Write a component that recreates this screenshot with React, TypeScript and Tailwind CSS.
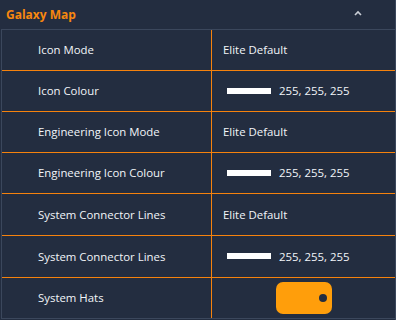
import React from "react";

type Row = { label: string; kind: "text" | "colour" | "toggle"; value?: string; h: string };

const rows: Row[] = [
  { label: "Icon Mode", kind: "text", value: "Elite Default", h: "h-[41px]" },
  { label: "Icon Colour", kind: "colour", value: "255, 255, 255", h: "h-[41px]" },
  { label: "Engineering Icon Mode", kind: "text", value: "Elite Default", h: "h-[41px]" },
  { label: "Engineering Icon Colour", kind: "colour", value: "255, 255, 255", h: "h-[41px]" },
  { label: "System Connector Lines", kind: "text", value: "Elite Default", h: "h-[42px]" },
  { label: "System Connector Lines", kind: "colour", value: "255, 255, 255", h: "h-[42px]" },
  { label: "System Hats", kind: "toggle", h: "h-[40px]" },
];

export default function App() {
  return (
    <div
      className="w-[396px] h-[320px] bg-[#232d40] border-r border-[#3b475c] overflow-hidden"
      style={{ fontFamily: '"Open Sans", "Noto Sans", sans-serif' }}
    >
      <div className="h-[29px] flex items-center justify-between pl-[6px] pr-[33px]">
        <span className="text-[12px] font-bold text-[#f7870f] leading-none">Galaxy Map</span>
        <svg width="8" height="6" viewBox="0 0 8 6" className="mt-[-4px]">
          <path d="M1 5 L4 2 L7 5" stroke="#c9ced6" strokeWidth="1.6" fill="none" />
        </svg>
      </div>
      <div className="ml-[1px] w-[394px] border-l border-t border-b border-[#3b475c]">
        {rows.map((r, i) => (
          <div
            key={i}
            className={`flex ${r.h} ${i < rows.length - 1 ? "border-b border-[#f5820d]" : ""}`}
          >
            <div className="w-[210px] border-r border-[#f5820d] flex items-center pl-[36px] text-[11.4px] text-[#f2f5f9]">
              {r.label}
            </div>
            <div className="flex-1 flex items-center text-[11.4px] text-[#f2f5f9]">
              {r.kind === "text" && <span className="pl-[11px]">{r.value}</span>}
              {r.kind === "colour" && (
                <div className="flex items-center pl-[15px]">
                  <div className="w-[44px] h-[6px] bg-white" />
                  <span className="ml-[8px]">{r.value}</span>
                </div>
              )}
              {r.kind === "toggle" && (
                <div className="pl-[64px]">
                  <div className="w-[56px] h-[32px] rounded-[7px] bg-[#ff9e0b] flex items-center justify-end pr-[5px]">
                    <div className="w-[8px] h-[8px] rounded-full bg-[#232d40]" />
                  </div>
                </div>
              )}
            </div>
          </div>
        ))}
      </div>
    </div>
  );
}
